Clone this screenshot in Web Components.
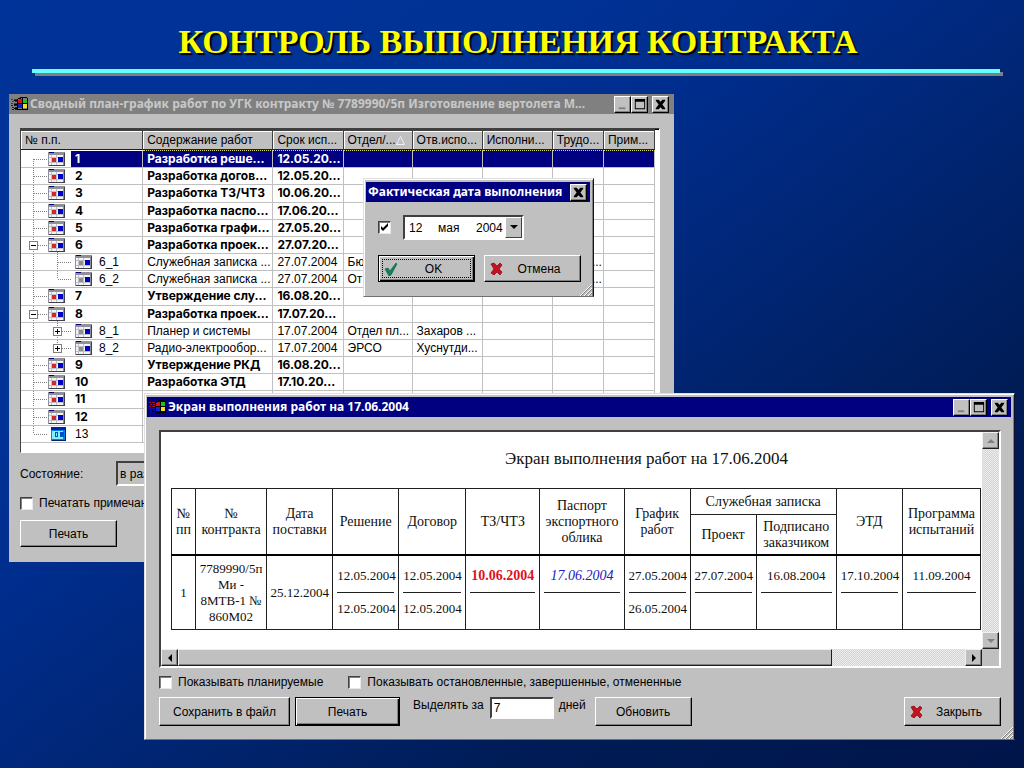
<!DOCTYPE html>
<html lang="ru">
<head>
<meta charset="utf-8">
<title>Контроль выполнения контракта</title>
<style>
html, body { margin: 0; min-height: 100%; }
body { font-family: "Liberation Sans", Arial, sans-serif; font-size: 12px; color: #000; background: #001a50; }
</style>
</head>
<body>
<slide-desktop>
  <slide-title slot="title">КОНТРОЛЬ ВЫПОЛНЕНИЯ КОНТРАКТА</slide-title>
  <plan-window></plan-window>
  <date-dialog></date-dialog>
  <report-window></report-window>
</slide-desktop>
<script>
const define = (name, html) => customElements.define(name, class extends HTMLElement {
  constructor() {
    super();
    const t = document.createElement('template');
    t.innerHTML = typeof html === 'function' ? html(this) : html;
    this.attachShadow({ mode: 'open' }).append(t.content);
  }
});

define('slide-desktop', `
<style>
:host { display: block; position: relative; min-height: 100vh; overflow: hidden;
  background: linear-gradient(to bottom right, #003399 0%, #003296 25%, #002e8f 38%, #00287c 50%, #001c56 75%, #00154a 100%); }
</style>
<slot name="title"></slot><slot></slot>`);

define('slide-title', `
<style>
:host { display: block; padding: 22px 20px 0 32px; text-align: center; }
h1 { margin: 0 0 7px; font: bold 34px/40px "Liberation Serif", "Times New Roman", serif; color: #ff0; text-shadow: 2px 2px 1px #000; white-space: nowrap; }
hr { margin: 0 4px 0 0; border: 0; height: 4px; background: #66ffff; box-shadow: 3px 3px 0 #808080; }
</style>
<h1><slot></slot></h1><hr>`);

define('app-logo', `
<style>:host { display: block; width: 18px; height: 16px; flex: none; } svg { display: block; }</style>
<svg width="18" height="16" viewBox="0 0 18 16" shape-rendering="crispEdges">
  <path d="M0 3h2v1H0zM3 3h3v1H3zM1 5h2v1H1zM4 5h2v1H4zM0 7h2v1H0zM3 7h3v1H3z" fill="#a01020"/>
  <path d="M0 9h2v1H0zM3 9h3v1H3zM1 11h2v1H1zM4 11h2v1H4zM1 13h2v1H1zM4 13h2v1H4z" fill="#1010a0"/>
  <path d="M7 2h3v1H7zM9 1h7v1H9zM6 3h1v11H6zM16 2h1v12h-1zM7 7h9v1H7zM7 13h9v1H7zM11 2h1v11h-1zM3 4h3v1H3zM3 8h3v1H3zM3 12h3v1H3z" fill="#000"/>
  <path d="M8 3h3v4H7V4h1z" fill="#e01010"/><path d="M12 3h4v4h-4z" fill="#20c020"/>
  <path d="M7 8h4v4H7z" fill="#1020d0"/><path d="M12 8h4v4h-4z" fill="#f0e020"/>
</svg>`);

const capIcons = {
  min: '<path d="M4 11h7v2H4z" fill="#808080"/>',
  max: '<path d="M3 2h11v11H3zM4 5v7h9V5z" fill="#000" fill-rule="evenodd"/>',
  close: '<path d="M3 3h3l2 2 2-2h3v1l-3 4 3 4v1h-3l-2-2-2 2H3v-1l3-4-3-4z" fill="#000"/>'
};
const capNames = { min: 'Свернуть', max: 'Развернуть', close: 'Закрыть окно' };
define('caption-button', el => `
<style>
:host { display: block; flex: none; }
:host([kind="close"][spaced]) { margin-left: 4px; }
button { display: block; width: 17px; height: 17px; padding: 0; border: 1px solid; border-color: #fff #000 #000 #fff; background: #c0c0c0; box-shadow: inset -1px -1px #808080; }
svg { display: block; }
</style>
<button type="button" aria-label="${capNames[el.getAttribute('kind')]}"><svg width="15" height="15" viewBox="0 0 16 16">${capIcons[el.getAttribute('kind')]}</svg></button>`);

define('win-frame', el => `
<style>
:host { display: block; background: #c0c0c0; }
:host([framed]) { padding: 3px 3px 1px 2px; border: 1px solid; border-color: #dfdfdf #101030 #707070 #dfdfdf; box-shadow: inset 1px 1px #fff, inset -1px 0 #808080; }
header { display: flex; align-items: center; height: 20px; padding: 0 var(--bar-end, 3px) 0 2px; box-sizing: border-box; background: var(--bar, #000080); color: var(--bar-ink, #fff); }
h2 { flex: 1; min-width: 0; margin: 0; font: bold 12px/18px "Noto Sans", Tahoma, sans-serif; white-space: nowrap; }
app-logo { margin-right: 1px; }
</style>
<header>${el.hasAttribute('logo') ? '<app-logo></app-logo>' : ''}<h2><slot name="caption"></slot></h2>${
  el.hasAttribute('full') ? '<caption-button kind="min"></caption-button><caption-button kind="max"></caption-button><caption-button kind="close" spaced></caption-button>'
  : '<caption-button kind="close"></caption-button>'}</header>
<slot></slot>`);

const marks = {
  ok: '<svg width="14" height="14" viewBox="0 0 14 14"><path d="M1 7l3-1 2 3 6-8 1 1-6 11-2 1z" fill="#108060" stroke="#0a6048" stroke-width=".6"/></svg>',
  no: '<svg width="13" height="13" viewBox="0 0 13 13"><path d="M1 2l3-1 3 3 3-3 2 2-3 4 3 3-2 3-3-3-3 3-3-2 3-4z" fill="#c81020" stroke="#780810" stroke-width=".7"/></svg>'
};
define('win-button', el => `
<style>
:host { display: block; flex: none; width: 97px; }
button { display: flex; align-items: center; width: 100%; height: var(--h, 27px); padding: 0 5px; border: 1px solid; border-color: #fff #000 #000 #fff; background: #c0c0c0; box-shadow: inset -1px -1px #808080; font: 12px/16px "Liberation Sans", Arial, sans-serif; color: #000; white-space: nowrap; }
:host([default]) button { border-color: #000; box-shadow: inset 1px 1px #fff, inset -1px -1px #000, inset -2px -2px #808080; }
:host([focus]) button { outline: 1px dotted #000; outline-offset: -5px; }
span { flex: 1; text-align: center; }
svg { display: block; flex: none; }
</style>
<button type="button">${marks[el.getAttribute('mark')] || ''}<span><slot></slot></span></button>`);

define('win-check', el => `
<style>
:host { display: block; flex: none; }
label { display: flex; align-items: center; gap: 6px; height: 14px; line-height: 14px; white-space: nowrap; }
input { appearance: none; flex: none; width: 13px; height: 13px; margin: 0; border: 1px solid; border-color: #404040 #e8e8e8 #e8e8e8 #404040; background: #fff; box-shadow: inset 1px 1px #808080; }
input:checked { background: #fff url("data:image/svg+xml,%3Csvg xmlns='http://www.w3.org/2000/svg' viewBox='0 0 11 11'%3E%3Cpath d='M2 4v3l2 2 5-5V1L4 6z'/%3E%3C/svg%3E"); }
</style>
<label><input type="checkbox" ${el.hasAttribute('checked') ? 'checked' : ''} ${el.hasAttribute('name') ? `aria-label="${el.getAttribute('name')}"` : ''}><slot></slot></label>`);

define('size-grip', `
<style>:host { display: block; position: absolute; right: 2px; bottom: 1px; } svg { display: block; }</style>
<svg width="12" height="12" viewBox="0 0 12 12"><path d="M0 12L12 0M4 12l8-8M8 12l4-4" stroke="#fff"/><path d="M1 12L12 1M5 12l7-7M9 12l3-3" stroke="#808080"/></svg>`);

/* Tree column: guide lines, expander box and calendar icon of one row */
const calendar = (x, kind) => kind === 'blue'
  ? `<g transform="translate(${x + 3} 1)"><path d="M0 0h15v14H0z" fill="#0080f0"/><path d="M0 0h15v3H0z" fill="#0020a0"/><path d="M1 4h11v8H1z" fill="#80f0ff"/><path d="M4 5h3v5H4zM9 5h4v5H9z" fill="#0050c0"/><path d="M5 6h1v3H5z" fill="#80f0ff"/><path d="M14 2h1v12H1v-1h13z" fill="#002060"/></g>`
  : `<g transform="translate(${x} 1)"><path d="M0 0h17v14H0z" fill="#909098"/><path d="M1 0h5v1H1z" fill="#000080"/><path d="M1 3h14v10H1z" fill="#f4f4f4"/><path d="M1 5h14v1H1zM1 10h14v1H1zM3 3h1v10H3zM8 3h1v10H8z" fill="#c0c0c8"/><path d="M4 6h4v4H4z" fill="${kind === 'gray' ? '#909090' : '#d02828'}"/><path d="M10 5h5v5h-5z" fill="#0000c0"/><path d="M16 1h1v13H1v-1h15z" fill="#404048"/></g>`;
const dot = d => `<path d="${d}" stroke="#808080" stroke-dasharray="1 1" fill="none"/>`;
const box = (x, plus) => `<path d="M${x - 4}.5 4.5h8v8h-8z" fill="#fff" stroke="#808080"/><path d="M${x - 2} 8.5h5${plus ? `M${x}.5 6v5` : ''}" stroke="#000"/>`;
const treeArt = r => {
  let s = '';
  if (!r.child) {
    s += dot(r.first ? 'M12.5 8v10' : r.last ? 'M12.5 0v8' : 'M12.5 0v18') + dot('M13 8.5h13');
    if (r.open) s += box(12, false) + dot('M36.5 15v3');
    s += calendar(27, r.last ? 'blue' : 'red');
  } else {
    s += dot('M12.5 0v18') + dot(r.lastChild ? 'M36.5 0v8' : 'M36.5 0v18') + dot('M37 8.5h13');
    if (r.plus) s += box(36, true);
    s += calendar(54, 'gray');
  }
  const w = r.child ? 74 : 50;
  return `<svg width="${w}" height="18" viewBox="0 0 ${w} 18" shape-rendering="crispEdges">${s}</svg>`;
};
const top_ = (n, name, due, x = {}) => ({ n, name, due, cells: [], ...x });
const sub = (n, name, due, cells, x = {}) => ({ n, name, due, cells, child: true, ...x });
const plan = [
  top_('1', 'Разработка реше...', '12.05.20...', { first: true }),
  top_('2', 'Разработка догов...', '12.05.20...'),
  top_('3', 'Разработка ТЗ/ЧТЗ', '10.06.20...'),
  top_('4', 'Разработка паспо...', '17.06.20...'),
  top_('5', 'Разработка графи...', '27.05.20...'),
  top_('6', 'Разработка проек...', '27.07.20...', { open: true }),
  sub('6_1', 'Служебная записка ...', '27.07.2004', ['Бю', '', '', '...']),
  sub('6_2', 'Служебная записка ...', '27.07.2004', ['От', '', '', '...'], { lastChild: true }),
  top_('7', 'Утверждение слу...', '16.08.20...'),
  top_('8', 'Разработка проек...', '17.07.20...', { open: true }),
  sub('8_1', 'Планер и системы', '17.07.2004', ['Отдел пл...', 'Захаров ...'], { plus: true }),
  sub('8_2', 'Радио-электрообор...', '17.07.2004', ['ЭРСО', 'Хуснутди...'], { plus: true, lastChild: true }),
  top_('9', 'Утверждение РКД', '16.08.20...'),
  top_('10', 'Разработка ЭТД', '17.10.20...'),
  top_('11', '', ''), top_('12', '', ''), top_('13', '', '', { last: true })
];

define('plan-grid', `
<style>
:host { display: block; box-sizing: border-box; padding: 0 4px 9px 0; border: 1px solid; border-color: #404040 #fff #fff #404040; background: #fff; box-shadow: inset 0 1px #000; }
table { width: 100%; height: 314px; border-collapse: separate; border-spacing: 0; table-layout: fixed; }
th, td { box-sizing: border-box; padding: 0 0 0 4px; white-space: nowrap; text-align: left; }
th { height: 21px; background: #c0c0c0; font-weight: normal; border-top: 2px solid #404040; border-right: 1px solid #404040; border-bottom: 1px solid #202020; box-shadow: inset 1px 1px #fff; }
td { height: 17px; line-height: 16px; border-right: 1px solid #c0c0c0; border-bottom: 1px solid #c0c0c0; }
tr.top td { font: bold 12px/16px Inter, Tahoma, sans-serif; }
tr.top.last td { font: 12px/16px "Liberation Sans", Arial, sans-serif; }
td:first-child { padding: 0; }
.tree { display: flex; height: 16px; overflow: hidden; }
.tree svg { flex: none; display: block; }
.tree span { flex: 1; padding-left: 4px; }
tr.sel td { color: #fff; border-top: 1px dotted #e0e060; }
tr.sel td:first-child { border-top-color: transparent; }
tr.sel td:not(:first-child), tr.sel .tree span { background: #000080; }
td:nth-child(7) { text-align: right; padding-right: 1px; }
th svg { vertical-align: -1px; }
</style>
<table>
<colgroup><col style="width:122px"><col style="width:130px"><col style="width:70px"><col style="width:69px"><col style="width:70px"><col style="width:70px"><col style="width:51px"><col style="width:51px"></colgroup>
<thead><tr><th>№ п.п.</th><th>Содержание работ</th><th>Срок исп...</th><th>Отдел/...<svg width="9" height="9" viewBox="0 0 9 9"><path d="M4.5.5l-4 8h8z" fill="none" stroke="#f0f0f0"/></svg></th><th>Отв.испо...</th><th>Исполни...</th><th>Трудо...</th><th>Прим...</th></tr></thead>
<tbody>${plan.map((r, i) => `<tr class="${r.child ? 'child' : 'top'}${r.last ? ' last' : ''}${i ? '' : ' sel'}"><td><div class="tree">${treeArt(r)}<span>${r.n}</span></div></td><td>${r.name}</td><td>${r.due}</td>${[0, 1, 2, 3, 4].map(k => `<td>${r.cells[k] || ''}</td>`).join('')}</tr>`).join('')}</tbody>
</table>`);

define('plan-window', `
<style>
:host { display: block; position: absolute; left: 9px; right: 350px; top: 94px; }
win-frame { --bar: #808080; --bar-ink: #c8c8c8; --bar-end: 5px; }
.body { padding: 14px 14px 15px 11px; }
.state { display: flex; align-items: center; gap: 35px; margin: 8px 0 10px; white-space: nowrap; }
.state label { width: 61px; }
.state input { box-sizing: border-box; width: 200px; height: 25px; padding: 0 2px; border: 2px solid; border-color: #404040 #fff #fff #404040; background: #c0c0c0; font: 12px "Liberation Sans", Arial, sans-serif; }
win-button { margin-top: 10px; }
</style>
<win-frame logo full><span slot="caption">Сводный план-график работ по УГК контракту № 7789990/5п Изготовление вертолета М...</span>
<div class="body"><plan-grid></plan-grid>
<div class="state"><label for="st">Состояние:</label><input id="st" value="в разработке" readonly></div>
<win-check>Печатать примечания</win-check>
<win-button>Печать</win-button></div></win-frame>`);

define('date-dialog', `
<style>
:host { display: block; position: absolute; left: 363px; top: 178px; width: 231px; }
.body { position: relative; padding: 13px 10px 13px 12px; }
.row { display: flex; align-items: center; gap: 12px; margin-bottom: 15px; }
.date { display: flex; box-sizing: border-box; width: 121px; height: 25px; padding: 0 0 0 4px; border: 2px solid; border-color: #404040 #fff #fff #404040; background: #fff; }
.date input { width: 29px; padding: 0; border: 0; background: none; font: 12px "Liberation Sans", Arial, sans-serif; }
.date .m { flex: 1; }
.date button { width: 17px; padding: 0; border: 1px solid; border-color: #fff #404040 #404040 #fff; background: #c0c0c0; }
.date svg { display: block; margin: auto; }
.btns { display: flex; gap: 9px; }
</style>
<win-frame framed><span slot="caption">Фактическая дата выполнения</span>
<div class="body">
<div class="row"><win-check checked name="Дата выполнена"></win-check>
<div class="date"><input aria-label="День" value="12"><input class="m" aria-label="Месяц" value="мая"><input aria-label="Год" value="2004"><button type="button" aria-label="Календарь"><svg width="8" height="5" viewBox="0 0 8 5"><path d="M0 0h8L4 4z"/></svg></button></div></div>
<div class="btns"><win-button mark="ok" default focus>OK</win-button><win-button mark="no">Отмена</win-button></div>
</div></win-frame><size-grip></size-grip>`);

const pair = (a, b = '&nbsp;', cls = '') => `<td><div class="pair ${cls}"><span>${a}</span><span>${b}</span></div></td>`;
define('report-sheet', `
<style>
:host { display: block; width: calc(100% + 150px); font: 13px/16px "Liberation Serif", "Times New Roman", serif; color: #101010; }
h3 { margin: 0; padding: 16px 0 19px; font-size: 17px; line-height: 21px; font-weight: normal; text-align: center; }
table { width: calc(100% - 161px); margin-left: 10px; border-collapse: collapse; table-layout: fixed; }
th, td { padding: 0; border: 1px solid #202020; text-align: center; }
th { font-weight: normal; font-size: 14px; height: 39px; }
thead tr:first-child th { height: 25px; }
thead { border-bottom: 2px solid #000; }
td { height: 73px; }
.pair { margin: 0 4px; }
.pair span { display: block; height: 32px; line-height: 32px; }
.pair span:first-child { border-bottom: 1px solid #202020; }
.late span { font-weight: bold; font-size: 14px; color: #e01020; }
.soon span { font-style: italic; font-size: 14px; color: #2020c0; }
</style>
<h3>Экран выполнения работ на 17.06.2004</h3>
<table>
<colgroup>${[24, 71, 66, 66, 67, 74, 84, 66, 66, 80, 66, 78].map(w => `<col style="width:${w}px">`).join('')}</colgroup>
<thead><tr><th rowspan="2">№<br>пп</th><th rowspan="2">№<br>контракта</th><th rowspan="2">Дата<br>поставки</th><th rowspan="2">Решение</th><th rowspan="2">Договор</th><th rowspan="2">ТЗ/ЧТЗ</th><th rowspan="2">Паспорт<br>экспортного<br>облика</th><th rowspan="2">График<br>работ</th><th colspan="2">Служебная записка</th><th rowspan="2">ЭТД</th><th rowspan="2">Программа<br>испытаний</th></tr>
<tr><th>Проект</th><th>Подписано<br>заказчиком</th></tr></thead>
<tbody><tr><td>1</td><td>7789990/5п<br>Ми -<br>8МТВ-1 №<br>860М02</td><td>25.12.2004</td>${pair('12.05.2004', '12.05.2004')}${pair('12.05.2004', '12.05.2004')}${pair('10.06.2004', undefined, 'late')}${pair('17.06.2004', undefined, 'soon')}${pair('27.05.2004', '26.05.2004')}${pair('27.07.2004')}${pair('16.08.2004')}${pair('17.10.2004')}${pair('11.09.2004')}</tr></tbody>
</table>`);

const arrows = { up: 'M0 4h8L4 0z', down: 'M0 0h8L4 4z', left: 'M4 0v8L0 4z', right: 'M0 0v8l4-4z' };
const arrowNames = { up: 'Вверх', down: 'Вниз', left: 'Влево', right: 'Вправо' };
define('scroll-arrow', el => {
  const d = el.getAttribute('dir'), v = d === 'up' || d === 'down';
  return `
<style>
:host { display: block; flex: none; }
button { display: flex; align-items: center; justify-content: center; width: 17px; height: 17px; padding: 0; border: 1px solid; border-color: #f0f0f0 #202020 #202020 #f0f0f0; background: #c0c0c0; box-shadow: inset -1px -1px #808080; }
</style>
<button type="button" aria-label="${arrowNames[d]}"><svg width="${v ? 8 : 4}" height="${v ? 4 : 8}"><path d="${arrows[d]}" fill="${v ? '#808080' : '#000'}"/></svg></button>`;
});

define('report-window', `
<style>
:host { display: block; position: absolute; left: 144px; right: 9px; top: 393px; }
.body { padding: 13px 10px 12px 12px; }
.pane { display: grid; grid-template-columns: minmax(0, 1fr) 17px; border: 2px solid; border-color: #404040 #fff #fff #404040; background: #c0c0c0; }
.view { height: 217px; overflow: hidden; background: #fff; }
.v, .h { display: flex; background: repeating-conic-gradient(#d4d4d4 0 25%, #ececec 0 50%) 0 0 / 2px 2px; }
.v { flex-direction: column; justify-content: space-between; }
.thumb { flex: 1; height: 17px; box-sizing: border-box; border: 1px solid; border-color: #f0f0f0 #202020 #202020 #f0f0f0; background: #c0c0c0; box-shadow: inset 0 -1px #808080; }
.gap { width: 133px; }
.checks { display: flex; gap: 25px; margin: 7px 0 8px; }
.row { display: flex; align-items: flex-start; --h: 29px; }
.row label, .row span { line-height: 17px; white-space: nowrap; }
.row input { box-sizing: border-box; width: 64px; height: 22px; margin: 0 5px 0 6px; padding: 0 2px; border: 2px solid; border-color: #404040 #fff #fff #404040; background: #fff; font: 12px "Liberation Sans", Arial, sans-serif; }
.save { width: 131px; margin-right: 5px; }
.print { width: 105px; margin-right: 13px; }
.refresh { margin-left: 9px; }
.close { margin-left: auto; }
</style>
<win-frame framed logo full><span slot="caption">Экран выполнения работ на 17.06.2004</span>
<div class="body">
<div class="pane"><div class="view"><report-sheet></report-sheet></div>
<div class="v"><scroll-arrow dir="up"></scroll-arrow><scroll-arrow dir="down"></scroll-arrow></div>
<div class="h"><scroll-arrow dir="left"></scroll-arrow><div class="thumb"></div><div class="gap"></div><scroll-arrow dir="right"></scroll-arrow></div></div>
<div class="checks"><win-check>Показывать планируемые</win-check><win-check>Показывать остановленные, завершенные, отмененные</win-check></div>
<div class="row"><win-button class="save">Сохранить в файл</win-button><win-button class="print" default>Печать</win-button><label for="days">Выделять за</label><input id="days" value="7"><span>дней</span><win-button class="refresh">Обновить</win-button><win-button class="close" mark="no">Закрыть</win-button></div>
</div></win-frame><size-grip></size-grip>`);
</script>
</body>
</html>
